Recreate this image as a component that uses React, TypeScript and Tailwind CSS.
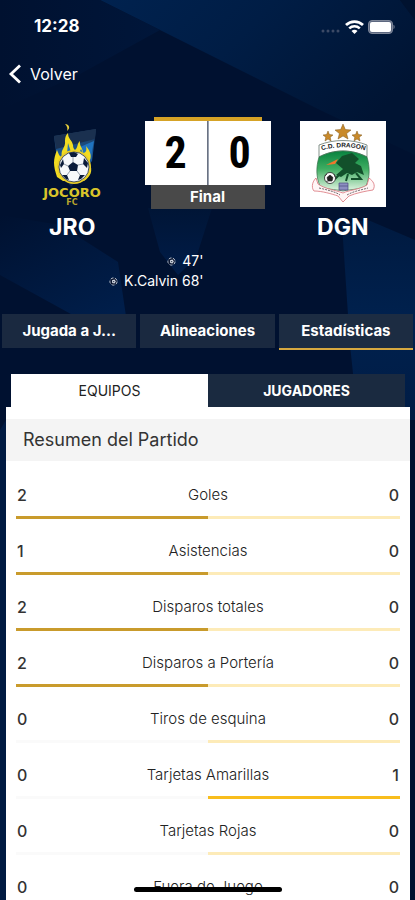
import type { ReactNode } from 'react'

const STATS = [
  { label: 'Goles', home: 2, away: 0 },
  { label: 'Asistencias', home: 1, away: 0 },
  { label: 'Disparos totales', home: 2, away: 0 },
  { label: 'Disparos a Portería', home: 2, away: 0 },
  { label: 'Tiros de esquina', home: 0, away: 0 },
  { label: 'Tarjetas Amarillas', home: 0, away: 1 },
  { label: 'Tarjetas Rojas', home: 0, away: 0 },
  { label: 'Fuera de Juego', home: 0, away: 0 },
]

const TABS = ['Jugada a J...', 'Alineaciones', 'Estadísticas']

function Background() {
  return (
    <svg
      className="absolute inset-0 w-full h-full"
      viewBox="0 0 415 900"
      preserveAspectRatio="xMidYMin slice"
      aria-hidden="true"
    >
      <defs>
        <linearGradient id="beam" x1="0" y1="0" x2="1" y2="0.5">
          <stop offset="0" stopColor="#00224f" />
          <stop offset="0.45" stopColor="#001d45" />
          <stop offset="1" stopColor="#001433" />
        </linearGradient>
        <linearGradient id="corner" x1="0" y1="0" x2="1" y2="0">
          <stop offset="0" stopColor="#001130" />
          <stop offset="1" stopColor="#00163a" />
        </linearGradient>
        <linearGradient id="left" x1="0" y1="0" x2="0.6" y2="1">
          <stop offset="0" stopColor="#001130" />
          <stop offset="1" stopColor="#001e4a" />
        </linearGradient>
        <linearGradient id="wedge" x1="0" y1="0" x2="0" y2="1">
          <stop offset="0" stopColor="#001536" />
          <stop offset="1" stopColor="#001c48" />
        </linearGradient>
        <linearGradient id="right" x1="0" y1="0" x2="0" y2="1">
          <stop offset="0" stopColor="#001a40" />
          <stop offset="0.5" stopColor="#00214e" />
          <stop offset="1" stopColor="#001c45" />
        </linearGradient>
      </defs>
      <rect width="415" height="900" fill="#001130" />
      <path d="M100 0H400L415 20V155L320 110Z" fill="url(#beam)" />
      <path d="M400 0H415V20Z" fill="#00122f" />
      <path d="M0 0H100L160 30L80 74L0 110Z" fill="url(#corner)" />
      <path d="M0 215L60 225L118 262L128 330H100L0 275Z" fill="url(#left)" />
      <path d="M148 208H212L196 258L178 275L160 252Z" fill="url(#wedge)" />
      <path d="M342 224L368 220L415 240V420H358L350 345Z" fill="url(#right)" />
      <path d="M0 430L6 420V900H0Z" fill="#001a42" />
    </svg>
  )
}

function StatusBar() {
  return (
    <div className="flex items-center justify-between pl-[34px] pr-5 h-[54px] text-white">
      <span className="text-[17px] font-bold">12:28</span>
      <div className="flex items-center gap-1">
        <svg width="20" height="14" viewBox="0 0 20 14" fill="#3c4a66" aria-hidden="true">
          <circle cx="2" cy="11" r="1.5" />
          <circle cx="7" cy="11" r="1.5" />
          <circle cx="12" cy="11" r="1.5" />
          <circle cx="17" cy="11" r="1.5" />
        </svg>
        <svg width="19" height="14" viewBox="0 0 19 14" fill="none" stroke="white" aria-hidden="true">
          <path d="M1 5C5.8 0.4 13.2 0.4 18 5" strokeWidth="2.8" />
          <path d="M4.2 8.4C7.2 5.6 11.8 5.6 14.8 8.4" strokeWidth="2.6" />
          <path d="M9.5 14L6.5 11C8.3 9.4 10.7 9.4 12.5 11Z" fill="white" stroke="none" />
        </svg>
        <svg width="27" height="14" viewBox="0 0 27 14" aria-hidden="true">
          <rect x="0.5" y="0.5" width="24" height="13" rx="3.5" fill="#5d6880" stroke="#7e8799" />
          <rect x="2" y="2" width="21" height="10" rx="2" fill="white" />
          <path d="M25.5 4.8C27 5.4 27 8.6 25.5 9.2Z" fill="#7e8799" />
        </svg>
      </div>
    </div>
  )
}

function JocoroCrest() {
  return (
    <svg className="w-20 h-[86px]" viewBox="0 0 80 86" role="img" aria-label="Jocoro FC">
      <defs>
        <linearGradient id="shield" x1="0" y1="0" x2="0" y2="1">
          <stop offset="0" stopColor="#1d3657" />
          <stop offset="0.5" stopColor="#1b5d9f" />
          <stop offset="1" stopColor="#0a2150" />
        </linearGradient>
      </defs>
      <path d="M22 15L64 8L60 40L39 66L26 46Z" fill="url(#shield)" />
      <path d="M22 15L64 8L63 18L24 28Z" fill="#1a304f" />
      <path d="M48 26L62 20L58 40L52 34Z" fill="#1f73bf" />
      <path d="M33 3C37 3 39 7 35 10C36 7 35 5 33 3Z" fill="#e8d03c" />
      <path
        d="M25 56C21 44 21 39 25 29C27 34 28 36 30 36C28 28 34 27 33 20C33 16 34 14 36 12C36 18 40 19 41 24C41 27 42 28 43 29C46 27 45 22 48 20C47 25 51 27 51 32C54 32 55 29 54 25C59 31 60 36 57 41C62 50 58 56 52 60H31Z"
        fill="#f2dc21"
      />
      <path d="M36 22L39 31L35 33ZM49 28L52 34L47 32Z" fill="#2273b3" />
      <circle cx="42" cy="46" r="17" fill="#e8cd28" />
      <circle cx="42" cy="46" r="15" fill="#f6f8fa" stroke="#1a2b4a" strokeWidth="0.8" />
      <path d="M41 41L46 44L45 50H38L36 45Z" fill="#0a1b3a" />
      <path d="M37 32L42 31L46 33L44 36H39Z" fill="#0a1b3a" />
      <path d="M28 44L31 38L32 43L29 47Z" fill="#0a1b3a" />
      <path d="M52 37L56 42L55 47L51 43Z" fill="#0a1b3a" />
      <path d="M30 54L35 54L37 59L34 58Z" fill="#0a1b3a" />
      <path d="M53 54L48 54L46 59L49 58Z" fill="#0a1b3a" />
      <path d="M41 41V36M46 44L51 43M45 50L48 54M38 50L35 54M36 45L32 43" stroke="#7b8798" strokeWidth="0.8" />
      <text x="40" y="76" textAnchor="middle" fill="#d9c42a" fontFamily="DejaVu Sans" fontWeight="700" fontSize="13">JOCORO</text>
      <text x="40" y="84" textAnchor="middle" fill="#b8a52c" fontFamily="DejaVu Sans" fontWeight="700" fontSize="8">FC</text>
    </svg>
  )
}

function DragonCrest() {
  return (
    <svg className="w-[86px] h-[86px] bg-white" viewBox="0 0 86 86" role="img" aria-label="C.D. Dragón">
      <defs>
        <linearGradient id="field" x1="0" y1="0" x2="0" y2="1">
          <stop offset="0" stopColor="#07823f" />
          <stop offset="0.45" stopColor="#3fae62" />
          <stop offset="1" stopColor="#e4f5e4" />
        </linearGradient>
      </defs>
      <g fill="#c98a2b" stroke="#7d5417" strokeWidth="0.5">
        <path d="M43 3L45.3 8.5L51 9L46.6 12.6L48 18L43 15L38 18L39.4 12.6L35 9L40.7 8.5Z" />
        <path d="M28 10L29.4 13.5L33 14L30.2 16.2L31 20L28 18L25 20L25.8 16.2L23 14L26.6 13.5Z" />
        <path d="M57 10L58.4 13.5L62 14L59.2 16.2L60 20L57 18L54 20L54.8 16.2L52 14L55.6 13.5Z" />
      </g>
      <path d="M19 24C34 18 52 18 67 24L67 36C52 28 34 28 19 36Z" fill="white" stroke="#51645a" strokeWidth="0.7" />
      <path id="name-arc" d="M20 30C34 25 52 25 67 30" fill="none" />
      <text fill="#17221c" fontFamily="Liberation Sans" fontWeight="700" fontSize="6.5">
        <textPath href="#name-arc" startOffset="50%" textAnchor="middle">C.D. DRAGON</textPath>
      </text>
      <path d="M19 36C34 28 52 28 67 36C70 46 70 56 66 65C58 69 52 68 43 70C34 68 27 69 20 65C16 56 16 46 19 36Z" fill="url(#field)" stroke="#356d48" strokeWidth="0.7" />
      <path d="M26 44L38 38L35 43Z" fill="#f2762c" />
      <path d="M36 42L42 35L52 32L59 38L55 42L61 45L64 54L57 51L52 54L47 52L41 56L36 54L43 48Z" fill="#12502b" />
      <path d="M40 53L35 58M48 53L46 60M56 52L61 58L51 58" stroke="#12502b" strokeWidth="2" fill="none" />
      <circle cx="30" cy="57" r="5.5" fill="white" stroke="#222" strokeWidth="0.8" />
      <path d="M30 54L33 56.5L32 60H28L27 56.5ZM25 55L27 53M34 53L35 56M26 60L28 61" fill="#222" stroke="#222" strokeWidth="0.7" />
      <path d="M16 57C11 62 12 68 14 70C22 70 32 73 38 75L43 81L49 75C56 72 66 70 73 69C76 64 73 60 69 57L67 64C58 69 49 69 43 72C35 69 25 68 18 63Z" fill="#fff6f6" stroke="#d9747b" strokeWidth="0.8" />
      <path d="M19 67C28 69 36 71 40 74M47 74C54 70 61 69 68 67" stroke="#746b70" strokeWidth="1" strokeDasharray="2 1" fill="none" />
      <path d="M39 62H48V69H39ZM39 65H48" fill="#8d8fc1" stroke="#4b4c82" strokeWidth="0.7" />
    </svg>
  )
}

function GoalIcon() {
  return (
    <svg width="9" height="9" viewBox="0 0 9 9" aria-hidden="true">
      <circle cx="4.5" cy="4.5" r="3.6" fill="#0b1630" stroke="#b9c2cf" strokeWidth="1" strokeDasharray="3 1.5" />
      <path d="M3 3.2L5.5 2.5L6.8 4.5L5.5 6.5L3.2 6Z" fill="#d3d9e1" />
      <path d="M3.8 4L5.3 3.9L5 5.6Z" fill="#16223c" />
    </svg>
  )
}

function Goal({ children }: { children: ReactNode }) {
  return (
    <div className="flex items-center gap-[6px]">
      <GoalIcon />
      <span>{children}</span>
    </div>
  )
}

function Scoreboard() {
  return (
    <section className="grid grid-cols-[1fr_126px_1fr] text-white">
      <div className="flex flex-col items-center pt-1">
        <JocoroCrest />
        <h2 className="mt-1 text-[23px] leading-8 font-bold">JRO</h2>
      </div>
      <div className="flex flex-col items-center">
        <div className="w-[108px] h-1 bg-[#d6a326]" />
        <div className="grid grid-cols-2 w-full h-16 bg-white text-black text-[44px] leading-[64px] text-center font-bold font-['Roboto_Condensed','Open_Sans_Condensed','Roboto',sans-serif]">
          <span className="border-r border-gray-500">2</span>
          <span className="border-l border-gray-400">0</span>
        </div>
        <div className="w-[114px] h-6 bg-[#494949] text-center text-[15px] leading-6 font-bold">Final</div>
      </div>
      <div className="flex flex-col items-center pt-1">
        <DragonCrest />
        <h2 className="mt-1 text-[23px] leading-8 font-bold">DGN</h2>
      </div>
    </section>
  )
}

function StatRow({ label, home, away }: { label: string; home: number; away: number }) {
  const homeBar = home > 0 ? 'bg-[#c99b2c]' : 'bg-[#fafafa]'
  const awayBar = away > 0 ? 'bg-[#f8bd1c]' : 'bg-[#fdebb8]'
  return (
    <li className="h-14">
      <div className="grid grid-cols-[32px_1fr_32px] items-center h-10 px-px">
        <span className="text-base font-medium text-[#333333]">{home}</span>
        <span className="text-center text-[15px] font-light text-[#222222]">{label}</span>
        <span className="text-right text-base font-medium text-[#333333]">{away}</span>
      </div>
      <div className="grid grid-cols-2 h-[3px] mt-px">
        <div className={homeBar} />
        <div className={awayBar} />
      </div>
    </li>
  )
}

export default function App() {
  return (
    <main className="relative h-screen overflow-hidden bg-[#001130] font-['Inter',sans-serif]">
      <Background />
      <div className="relative flex flex-col">
        <StatusBar />

        <header className="h-[63px] pt-[6px]">
          <a href="#" className="inline-flex items-center gap-2 pl-2 text-base leading-7 text-white">
            <svg width="14" height="20" viewBox="0 0 14 20" fill="none" stroke="white" strokeWidth="2.8" aria-hidden="true">
              <path d="M12 1.5L3 10L12 18.5" />
            </svg>
            Volver
          </a>
        </header>

        <Scoreboard />

        <div className="flex flex-col items-end w-1/2 mt-2 pr-1 text-[14px] leading-5 text-white">
          <Goal>47'</Goal>
          <Goal>K.Calvin 68'</Goal>
        </div>

        <nav className="grid grid-cols-3 items-start gap-1 px-[2px] mt-[23px]">
          {TABS.map((tab) => (
            <button
              key={tab}
              className={
                tab === 'Estadísticas'
                  ? 'h-9 px-4 truncate bg-[#1c2c42] text-[15px] font-bold text-white border-b-2 border-[#d6a840]'
                  : 'h-[34px] px-4 truncate bg-[#1a2940] text-[15px] font-bold text-white'
              }
            >
              {tab}
            </button>
          ))}
        </nav>

        <div className="grid grid-cols-2 h-[33px] ml-[11px] mr-[10px] mt-6 text-sm">
          <button className="bg-white text-[#222222]">EQUIPOS</button>
          <button className="bg-[#1a2a40] font-bold text-white">JUGADORES</button>
        </div>

        <section className="ml-[6px] mr-[5px] pt-3 bg-white">
          <h3 className="h-[42px] pl-[17px] bg-[#f4f4f4] text-lg leading-[42px] text-[#333333]">Resumen del Partido</h3>
          <ul className="px-[10px] pt-[14px]">
            {STATS.map((stat) => (
              <StatRow key={stat.label} {...stat} />
            ))}
          </ul>
        </section>
      </div>
      <div className="absolute inset-x-0 bottom-2 h-[5px] w-[148px] mx-auto rounded-full bg-black" />
    </main>
  )
}
